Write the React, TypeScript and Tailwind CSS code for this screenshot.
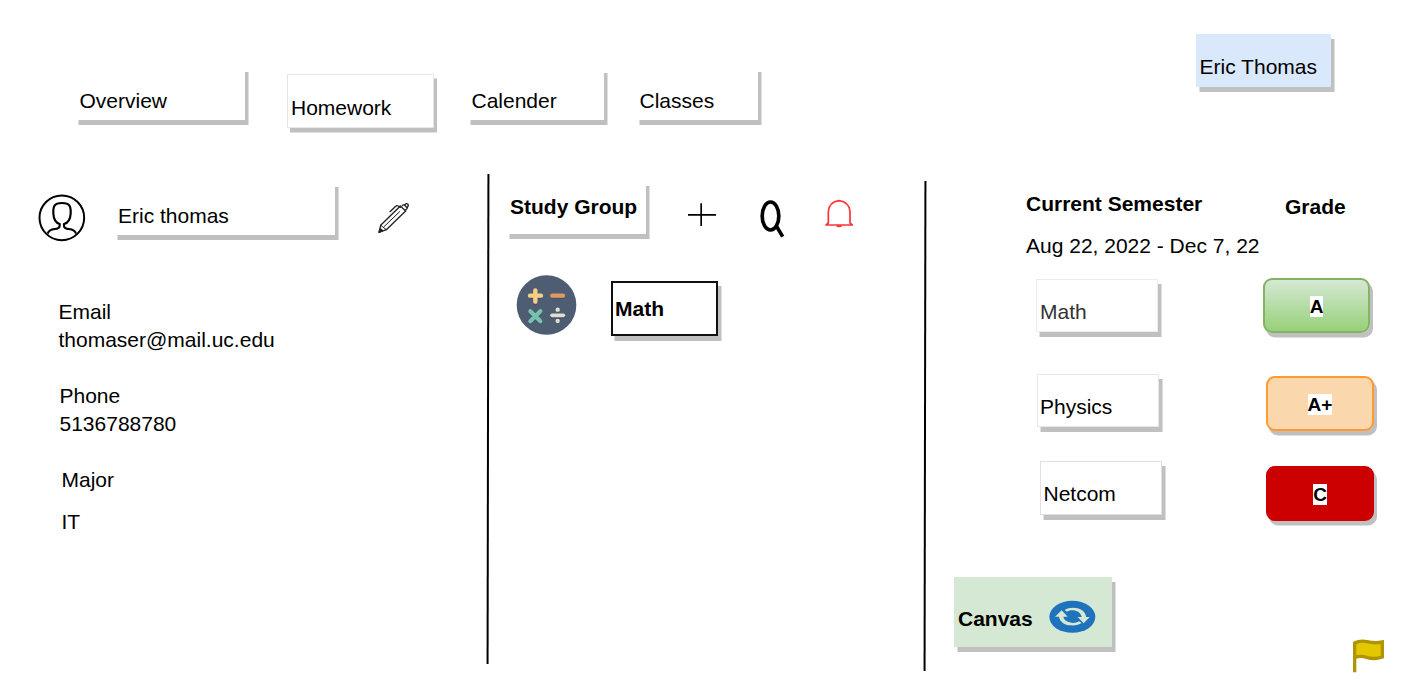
import type { ReactNode } from "react";

function Box({ className, children }: { className: string; children: ReactNode }) {
  return (
    <div className={`shrink-0 leading-6 whitespace-nowrap shadow-[3.5px_5px_0_#c0c0c0] ${className}`}>
      {children}
    </div>
  );
}

function Divider({ className }: { className: string }) {
  return <div className={`h-[490px] w-[2px] shrink-0 bg-black -skew-x-[0.1deg] ${className}`} />;
}

function Grade({ className, children }: { className: string; children: ReactNode }) {
  return (
    <div
      className={`flex h-[55px] items-center justify-center rounded-[9px] border-2 shadow-[3px_4.5px_0_#c0c0c0] ${className}`}
    >
      <span className="bg-white text-[19px] leading-[21px] font-bold">{children}</span>
    </div>
  );
}

function UserIcon() {
  return (
    <svg className="mt-[20px] ml-[38px] h-12 w-12 shrink-0" viewBox="54 57 144 144" fill="none" stroke="#000">
      <circle cx="125.500" cy="128.500" r="67" strokeWidth="6" />
      <path
        d="M83 176 C86 166 92 163 104 162 C115 161 119 158 119 152 V147 C108 144 101 133 100 116 C99 94 102 84 126 84 C150 84 153 94 152 116 C151 133 144 144 132 147 V152 C132 158 136 161 147 162 C159 163 165 166 168 176"
        strokeWidth="6.500"
        strokeLinejoin="round"
      />
    </svg>
  );
}

function PenIcon() {
  return (
    <svg
      className="mt-[27px] ml-[41px] h-[34px] w-[36px] shrink-0"
      viewBox="1068 78 108 102"
      fill="none"
      stroke="#222"
      strokeWidth="4"
      strokeLinejoin="round"
      strokeLinecap="round"
    >
      <path d="M1077 172 L1082 151 L1141 93 L1157 108 L1099 164 Z" />
      <path d="M1082 151 L1099 164 M1092 155 L1139 110" strokeWidth="3" />
      <path d="M1110 110 L1127 94 Q1131 90 1135 93 L1141 97 M1147 92 Q1150 88 1154 91 L1162 99 L1156 106 M1155 89 Q1158 84 1163 87 Q1167 92 1162 97" />
      <path d="M1077 172 L1081 161 L1088 167 Z" fill="#222" />
    </svg>
  );
}

function OperatorsIcon() {
  return (
    <svg className="mt-[36px] ml-[27px] h-[62px] w-[61px] shrink-0" viewBox="48 42 183 186" fill="none" strokeLinecap="round">
      <circle cx="139.500" cy="135" r="89.500" fill="#4f5d73" />
      <g stroke="#3e4a5e" strokeOpacity="0.5" transform="translate(0 4)" strokeWidth="12">
        <path d="M90 107H123M106 91V127M156 107H190M92 155L121 184M121 155L92 184M156 166H190" />
      </g>
      <path d="M90 107H123M106 91V125" stroke="#f5cf87" strokeWidth="13" />
      <path d="M157 107H189" stroke="#e0995e" strokeWidth="13" />
      <path d="M91 154L121 184M121 154L91 184" stroke="#76c2af" strokeWidth="12.500" />
      <path d="M156 166H190" stroke="#e0e0d1" strokeWidth="11" />
      <circle cx="173" cy="149" r="6.500" fill="#e0e0d1" />
      <circle cx="173" cy="183" r="6.500" fill="#e0e0d1" />
    </svg>
  );
}

function SyncIcon() {
  return (
    <svg className="mt-[23px] ml-[16px] h-[34px] w-[47px] shrink-0" viewBox="327 105 141 102">
      <ellipse cx="397" cy="155.500" rx="69" ry="48" fill="#1f73bd" />
      <g fill="#d5e8d4">
        <path d="M374 135 C384 128 400 126 413 130 C430 135 437 145 438 156 H449 L431 175 L413 156 H425 C423 145 413 137 399 136 C392 135 386 137 381 140 Z" />
        <path d="M365 136 L345 155 H357 C359 168 371 180 391 181 C406 182 417 179 425 174 L417 169 C409 174 398 175 389 172 C378 169 371 163 370 155 H383 Z" />
      </g>
    </svg>
  );
}

export default function App() {
  return (
    <div className="flex h-[694px] w-[1428px] flex-col overflow-hidden bg-white font-['Liberation_Sans',Arial,sans-serif] text-[21px] leading-6 text-black">
      <header className="flex h-[174px] shrink-0 items-start">
        <nav className="flex items-start">
          <Box className="mt-[67px] ml-[75px] h-[53px] w-[170px] bg-white pt-[22px] pl-[4.5px]">Overview</Box>
          <Box className="mt-[74px] ml-[42px] h-[54px] w-[147px] border border-[#e6e6e6] bg-white pt-[21px] pl-[3px] shadow-[3px_4.5px_0_#c0c0c0]">Homework</Box>
          <Box className="mt-[68px] ml-[33px] h-[52px] w-[137px] bg-white pt-[21px] pl-[4.5px]">Calender</Box>
          <Box className="mt-[67px] ml-[32px] h-[53px] w-[122px] bg-white pt-[22px] pl-[3.5px]">Classes</Box>
        </nav>
        <Box className="mt-[34px] ml-[438px] h-[53px] w-[135px] bg-[#dae8fc] pt-[21px] pl-[3.5px]">Eric Thomas</Box>
      </header>

      <main className="flex flex-1 items-start">
        <section className="w-[487px] shrink-0">
          <div className="flex h-[124px] items-start">
            <UserIcon />
            <Box className="mt-[8px] ml-[28px] h-[53px] w-[221px] bg-white pt-[22px] pl-[4px]">Eric thomas</Box>
            <PenIcon />
          </div>
          <div className="pl-[58.5px] leading-[28px]">
            <p>Email</p>
            <p>thomaser@mail.uc.edu</p>
            <p className="mt-[28px] pl-px">Phone</p>
            <p className="pl-px">5136788780</p>
            <p className="mt-[28px] pl-[3px]">Major</p>
            <p className="mt-[14px] pl-[3px]">IT</p>
          </div>
        </section>

        <Divider className="" />

        <section className="w-[435px] shrink-0">
          <div className="flex items-start">
            <Box className="mt-[7px] ml-[17px] h-[53px] w-[140px] bg-white pt-[14px] pl-[4px] font-bold">Study Group</Box>
            <svg className="mt-[28px] ml-[41px] h-[25px] w-[30px] shrink-0" viewBox="651 111 90 75" stroke="#000" strokeWidth="5">
              <path d="M654 149.500H738M693.500 115V183" />
            </svg>
            <svg className="mt-[24px] ml-[42px] h-[40px] w-[26px] shrink-0" viewBox="867 99 78 120" fill="none" stroke="#000" strokeWidth="11">
              <ellipse cx="901.500" cy="153" rx="25" ry="42" />
              <path d="M918 181L938 215" />
            </svg>
            <svg className="mt-[24px] ml-[39px] h-[30px] w-[30px] shrink-0" viewBox="1062 99 90 90" fill="none" stroke="#ff3333" strokeWidth="5">
              <path d="M1066 180H1149M1068 180L1075 174V140Q1077 111 1107 107Q1138 111 1140 140V174L1147 180" />
              <path d="M1100 182Q1107 186 1115 182" strokeWidth="6" />
            </svg>
          </div>
          <div className="flex items-start">
            <OperatorsIcon />
            <Box className="mt-[43px] ml-[34px] h-[55px] w-[107px] border-2 border-[#111] bg-white pt-[14px] pl-[2px] font-bold">Math</Box>
          </div>
        </section>

        <Divider className="mt-[7px]" />

        <section className="flex flex-1 flex-col">
          <div className="flex">
            <div className="w-[310px] shrink-0 pt-[18px] pl-[100px] whitespace-nowrap">
              <h2 className="font-bold">Current Semester</h2>
              <p className="mt-[18px]">Aug 22, 2022 - Dec 7, 22</p>
              <Box className="mt-[21px] ml-[10px] h-[53px] w-[122px] border border-[#ececec] bg-white pt-[20px] pl-[3px] text-[#333]">Math</Box>
              <Box className="mt-[42px] ml-[11px] h-[53px] w-[122px] border border-[#e6e6e6] bg-white pt-[20px] pl-[2px]">Physics</Box>
              <Box className="mt-[34px] ml-[14px] h-[54px] w-[122px] border border-[#e0e0e0] bg-white pt-[20px] pl-[2.5px]">Netcom</Box>
            </div>
            <div className="pt-[21px] pl-[27px]">
              <h2 className="pl-[22px] font-bold">Grade</h2>
              <Grade className="mt-[59px] w-[107px] border-[#82b366] bg-linear-to-b from-[#d5e8d4] to-[#97d077] pt-px">A</Grade>
              <Grade className="mt-[43px] ml-[3px] w-[108px] border-[#ff9933] bg-[#fad7ac] pt-px">A+</Grade>
              <Grade className="mt-[35px] ml-[3px] w-[108px] border-[#cc0000] bg-[#cc0000] pt-[2px]">C</Grade>
            </div>
          </div>
          <div className="mt-[56px] flex items-start">
            <Box className="ml-[28px] flex h-[70px] w-[158px] items-start bg-[#d5e8d4] pl-[4px] font-bold">
              <span className="pt-[30px]">Canvas</span>
              <SyncIcon />
            </Box>
            <svg className="mt-[62px] ml-[240px] h-[35px] w-[33px] shrink-0" viewBox="51 42 99 105">
              <path
                d="M59 142V54Q75 45 96 50Q120 56 142 51V96Q120 104 97 98Q78 91 60 97"
                fill="#e3c800"
                stroke="#b09500"
                strokeWidth="10"
              />
            </svg>
          </div>
        </section>
      </main>
    </div>
  );
}
